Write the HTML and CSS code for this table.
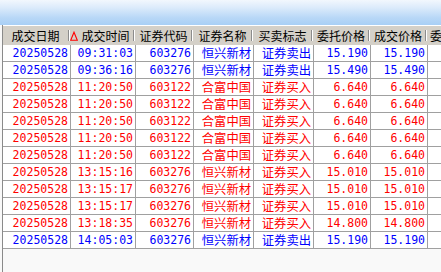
FILE: index.html
```html
<!DOCTYPE html>
<html>
<head>
<meta charset="utf-8">
<link rel="stylesheet" href="styles.css">
</head>
<body>
<div class="topbar"></div>
<div class="pane">
  <div class="row head">
    <div class="h">成交日期</div>
    <div class="h"><svg class="tri" width="8" height="10" viewBox="0 0 8 10"><path d="M4 1.2 L7.3 9.3 L0.7 9.3 Z" fill="none" stroke="#ff0000" stroke-width="1.1"/></svg>成交时间</div>
    <div class="h">证券代码</div>
    <div class="h">证券名称</div>
    <div class="h">买卖标志</div>
    <div class="h">委托价格</div>
    <div class="h">成交价格</div>
    <div class="h last">委</div>
  </div>
  <div class="row sell"><div class="n">20250528</div><div class="n">09:31:03</div><div class="n">603276</div><div class="c">恒兴新材</div><div class="c">证券卖出</div><div class="n">15.190</div><div class="n">15.190</div><div></div></div>
  <div class="row sell"><div class="n">20250528</div><div class="n">09:36:16</div><div class="n">603276</div><div class="c">恒兴新材</div><div class="c">证券卖出</div><div class="n">15.490</div><div class="n">15.490</div><div></div></div>
  <div class="row buy"><div class="n">20250528</div><div class="n">11:20:50</div><div class="n">603122</div><div class="c">合富中国</div><div class="c">证券买入</div><div class="n">6.640</div><div class="n">6.640</div><div></div></div>
  <div class="row buy"><div class="n">20250528</div><div class="n">11:20:50</div><div class="n">603122</div><div class="c">合富中国</div><div class="c">证券买入</div><div class="n">6.640</div><div class="n">6.640</div><div></div></div>
  <div class="row buy"><div class="n">20250528</div><div class="n">11:20:50</div><div class="n">603122</div><div class="c">合富中国</div><div class="c">证券买入</div><div class="n">6.640</div><div class="n">6.640</div><div></div></div>
  <div class="row buy"><div class="n">20250528</div><div class="n">11:20:50</div><div class="n">603122</div><div class="c">合富中国</div><div class="c">证券买入</div><div class="n">6.640</div><div class="n">6.640</div><div></div></div>
  <div class="row buy"><div class="n">20250528</div><div class="n">11:20:50</div><div class="n">603122</div><div class="c">合富中国</div><div class="c">证券买入</div><div class="n">6.640</div><div class="n">6.640</div><div></div></div>
  <div class="row buy"><div class="n">20250528</div><div class="n">13:15:16</div><div class="n">603276</div><div class="c">恒兴新材</div><div class="c">证券买入</div><div class="n">15.010</div><div class="n">15.010</div><div></div></div>
  <div class="row buy"><div class="n">20250528</div><div class="n">13:15:17</div><div class="n">603276</div><div class="c">恒兴新材</div><div class="c">证券买入</div><div class="n">15.010</div><div class="n">15.010</div><div></div></div>
  <div class="row buy"><div class="n">20250528</div><div class="n">13:15:17</div><div class="n">603276</div><div class="c">恒兴新材</div><div class="c">证券买入</div><div class="n">15.010</div><div class="n">15.010</div><div></div></div>
  <div class="row buy"><div class="n">20250528</div><div class="n">13:18:35</div><div class="n">603276</div><div class="c">恒兴新材</div><div class="c">证券买入</div><div class="n">14.800</div><div class="n">14.800</div><div></div></div>
  <div class="row sell"><div class="n">20250528</div><div class="n">14:05:03</div><div class="n">603276</div><div class="c">恒兴新材</div><div class="c">证券卖出</div><div class="n">15.190</div><div class="n">15.190</div><div></div></div>
</div>
</body>
</html>
```

FILE: styles.css
```css
html, body {
  margin: 0;
  padding: 0;
  width: 441px;
  height: 272px;
  overflow: hidden;
  background: #f9f9f9;
}

.topbar {
  height: 25px;
  background: linear-gradient(to bottom, #f2f7fd 0%, #dcebfb 30%, #b9d8f7 70%, #a8cff5 100%);
}

.pane {
  margin-left: 2px;
  border-left: 1px solid #8a8a8a;
  height: 247px;
  width: 438px;
  overflow: hidden;
}

.row {
  display: grid;
  grid-template-columns: 68px 65px 58px 60px 60px 57px 57px 1fr;
}

.head {
  height: 20px;
  background: #d4d0c8;
  border-top: 1px solid #ffffff;
  box-sizing: border-box;
  font-family: "Noto Sans CJK SC", sans-serif;
  font-size: 12px;
  color: #000;
}

.h {
  position: relative;
  display: flex;
  align-items: center;
  justify-content: center;
  gap: 2px;
  line-height: 18px;
  padding-right: 3px;
}

.h::after {
  content: "";
  position: absolute;
  right: 1px;
  top: 4px;
  width: 1px;
  height: 11px;
  background: #8c8c8c;
  border-right: 1px solid #ffffff;
}

.h.last {
  justify-content: flex-start;
  padding-left: 2px;
  padding-right: 0;
}

.h.last::after {
  display: none;
}

.tri {
  display: block;
  margin-left: -4px;
  margin-right: 1px;
}

.row:not(.head) {
  height: 17px;
  background: #ffffff;
  border-bottom: 1px solid #a0a0a0;
  box-sizing: border-box;
  line-height: 16px;
}

.row:not(.head) > div {
  border-right: 1px solid #a0a0a0;
  text-align: right;
  padding-right: 2px;
  white-space: nowrap;
  overflow: hidden;
}

.row:not(.head) > div:last-child {
  border-right: none;
}

.row:not(.head):first-of-type {
  border-top: 1px solid #a0a0a0;
}

.n {
  font-family: "DejaVu Sans Mono", monospace;
  font-size: 11.5px;
}

.c {
  font-family: "Noto Sans CJK SC", sans-serif;
  font-size: 12.3px;
}

.sell {
  color: #0000ff;
}

.buy {
  color: #ff0000;
}
```
